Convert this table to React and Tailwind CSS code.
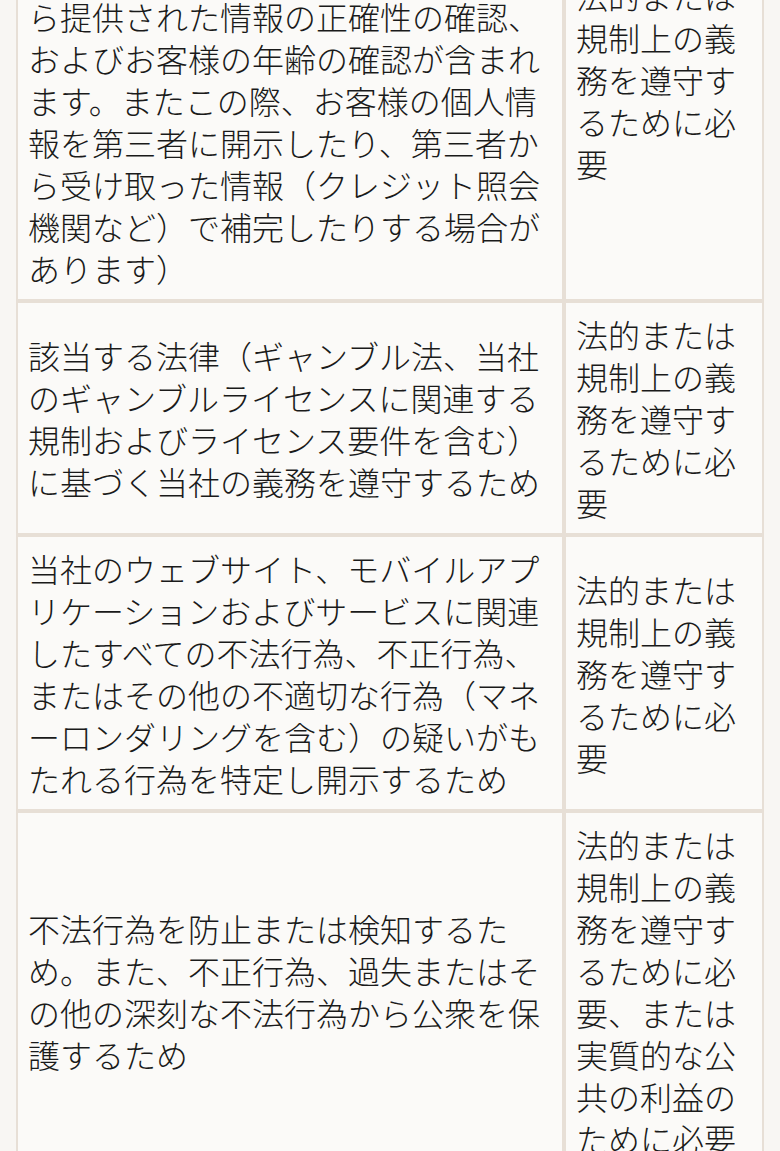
import React from "react";

const rows = [
  {
    purpose:
      "お客様の本人確認を行い、お客様のアカウントを開設、管理、維持するため（これには、当社が、お客様から提供された情報の正確性の確認、およびお客様の年齢の確認が含まれます。またこの際、お客様の個人情報を第三者に開示したり、第三者から受け取った情報（クレジット照会機関など）で補完したりする場合があります）",
    basis: "法的または規制上の義務を遵守するために必要",
  },
  {
    purpose:
      "該当する法律（ギャンブル法、当社のギャンブルライセンスに関連する規制およびライセンス要件を含む）に基づく当社の義務を遵守するため",
    basis: "法的または規制上の義務を遵守するために必要",
  },
  {
    purpose:
      "当社のウェブサイト、モバイルアプリケーションおよびサービスに関連したすべての不法行為、不正行為、またはその他の不適切な行為（マネーロンダリングを含む）の疑いがもたれる行為を特定し開示するため",
    basis: "法的または規制上の義務を遵守するために必要",
  },
  {
    purpose:
      "不法行為を防止または検知するため。また、不正行為、過失またはその他の深刻な不法行為から公衆を保護するため",
    basis: "法的または規制上の義務を遵守するために必要、または実質的な公共の利益のために必要",
  },
];

const App = () => {
  return (
    <div
      className="w-full h-screen overflow-hidden bg-[#f8f6f3] text-[#1a1a1a] font-light"
      style={{ fontFamily: '"Noto Sans CJK JP", "Noto Sans", sans-serif' }}
    >
      <div className="px-4 -mt-[143px]">
        <table className="w-full table-fixed border-separate border-spacing-0 text-[32px] leading-[42px]">
          <colgroup>
            <col />
            <col className="w-[200px]" />
          </colgroup>
          <tbody>
            {rows.map((row, i) => (
              <tr key={i}>
                <td className="align-middle border-2 border-[#e7dfd6] bg-[#fbfaf8] p-[10px]">
                  {row.purpose}
                </td>
                <td className="align-middle border-2 border-[#e7dfd6] bg-[#fbfaf8] p-[10px]">
                  {row.basis}
                </td>
              </tr>
            ))}
          </tbody>
        </table>
      </div>
    </div>
  );
};

export default App;
